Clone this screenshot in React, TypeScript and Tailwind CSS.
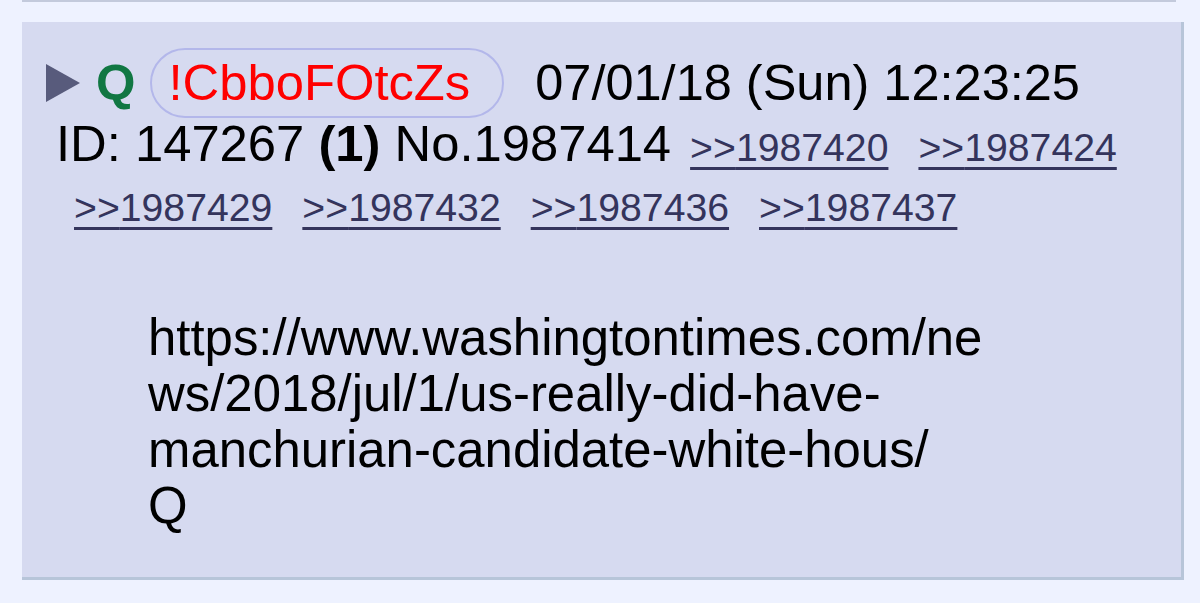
const replies: string[] = ["1987420", "1987424"];
const moreReplies: string[] = ["1987429", "1987432", "1987436", "1987437"];

const bodyLines: string[] = [
  "https://www.washingtontimes.com/ne",
  "ws/2018/jul/1/us-really-did-have-",
  "manchurian-candidate-white-hous/",
  "Q",
];

function ReplyLink({ id }: { id: string }) {
  return (
    <a
      href={`#${id}`}
      className="text-[39.2px] text-[#34345c] underline decoration-[3px] underline-offset-[6px]"
    >
      &gt;&gt;{id}
    </a>
  );
}

export default function App() {
  return (
    <div className="min-h-screen bg-[#eef2ff] font-['Liberation_Sans',Arial,sans-serif] text-black">
      {/* tail of the previous post */}
      <div className="ml-[22px] h-[2px] w-[1154px] bg-[#c3cadc]" />

      <article className="ml-[22px] mt-[20px] h-[558px] w-[1162px] border-b-[3px] border-r-[3px] border-[#b7c5d9] bg-[#d6daf0]">
        <header className="flex flex-col">
          <div className="mt-[26px] flex h-[70px] items-center pl-[24px]">
            <svg width="34" height="38" viewBox="0 0 34 38" className="shrink-0">
              <polygon points="0,0 34,19 0,38" fill="#585b7c" />
            </svg>
            <span className="ml-[16px] text-[50.75px] font-bold leading-none text-[#117743]">Q</span>
            <span className="ml-[15px] flex h-[70px] items-center rounded-full border-2 border-[#b3b7ea] pl-[16px] pr-[32px] text-[50.75px] leading-none text-[#ff0000]">
              !CbboFOtcZs
            </span>
            <span className="ml-[31px] text-[50.5px] leading-none">07/01/18 (Sun) 12:23:25</span>
          </div>

          <div className="-mt-[4px] flex h-[64px] items-baseline pl-[34px] text-[50.75px] leading-[60px]">
            <span>
              ID: 147267 <b>(1)</b> No.1987414
            </span>
            <span className="ml-[19px] flex gap-[30px]">
              {replies.map((r) => (
                <ReplyLink key={r} id={r} />
              ))}
            </span>
          </div>

          <div className="flex h-[60px] items-baseline gap-[30px] pl-[52px] leading-[60px]">
            {moreReplies.map((r) => (
              <ReplyLink key={r} id={r} />
            ))}
          </div>
        </header>

        <div className="ml-[126px] mt-[72px] text-[50.9px] leading-[56px]">
          {bodyLines.map((line) => (
            <div key={line}>{line}</div>
          ))}
        </div>
      </article>
    </div>
  );
}
